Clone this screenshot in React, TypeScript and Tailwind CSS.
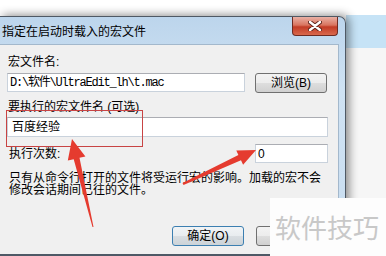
const FONT = { fontFamily: '"Liberation Sans", "Noto Sans CJK SC", sans-serif' };

const btn =
  'flex items-center justify-center h-[20px] w-[72px] rounded-[3px] border text-[12px] leading-[12px] text-black';
const grayFill = 'bg-[linear-gradient(#f3f3f3,#ececec_50%,#dedede_50%,#d0d0d0)]';
const input =
  'h-[19px] bg-white border border-[#c9d2dc] border-t-[#abadb3] flex items-center text-[12px] leading-[12px] text-black';

const CloseGlyph = () => (
  <svg width="14" height="10" viewBox="0 0 14 10" aria-hidden>
    <path d="M2 1l10 8M12 1L2 9" stroke="#5a2018" strokeWidth={4.2} strokeLinecap="round" />
    <path d="M2 1l10 8M12 1L2 9" stroke="#ffffff" strokeWidth={2.4} strokeLinecap="round" />
  </svg>
);

const Arrows = () => (
  <svg className="absolute inset-0 z-20 pointer-events-none" width="386" height="256" aria-hidden>
    {/* up arrow to the optional name box */}
    <polygon
      points="72,139 85.4,156.4 79.5,157.8 93.5,227 92.5,227 73.7,159.2 67.8,160.6"
      fill="#e53b2f"
    />
    {/* arrow to the run count box */}
    <polygon
      points="256,150 243.1,164.8 241,160.3 183.5,185 182.5,183 238.4,154.9 236.3,150.4"
      fill="#e53b2f"
    />
  </svg>
);

export default function App() {
  return (
    <div className="relative w-[386px] h-[256px] overflow-hidden bg-white flex" style={FONT}>
      {/* dialog window */}
      <div className="relative z-10 w-[346px] mt-[16px] flex flex-col bg-[linear-gradient(#bcd5ec,#cfe2f3_30%,#c8ddf0)] border-t border-r border-[#4f5964] rounded-tr-[7px] shadow-[3px_-1px_10px_rgba(0,0,0,0.45)]">
        <div className="h-[27px] flex items-start justify-between">
          <span className="pl-[2px] pt-[9px] text-[12px] leading-[12px] text-black">
            指定在启动时载入的宏文件
          </span>
          <div className="mr-[7px] w-[46px] h-[19px] rounded-b-[4px] border border-t-0 border-[#6e2b22] bg-[linear-gradient(#e9b1a5,#d9745f_45%,#c23c26_55%,#d9684c)] flex items-center justify-center">
            <CloseGlyph />
          </div>
        </div>

        <div className="flex-1 mr-[6px] bg-[#f0f0f0] border-t border-r border-[#a3b8cc] flex flex-col pl-[7px]">
          <div className="mt-[11px] pl-[1px] text-[12px] leading-[12px] text-black">宏文件名:</div>

          <div className="mt-[5px] flex items-start">
            <div
              className={`${input} w-[238px] pl-[2px] tracking-[-1.2px]`}
              style={{ fontFamily: '"Liberation Mono", "Noto Sans CJK SC", monospace' }}
            >
              D:\软件\UltraEdit_lh\t.mac
            </div>
            <button type="button" className={`${btn} ${grayFill} ml-[10px] border-[#707070]`}>
              浏览(B)
            </button>
          </div>

          <div className="mt-[8px] pl-[1px] text-[12px] leading-[12px] text-black">要执行的宏文件名 (可选)</div>

          <div className={`${input} mt-[4px] h-[20px] w-[321px] pl-[4px] border-t-[#6f8fad]`}>百度经验</div>

          <div className="mt-[7px] flex items-center">
            <span className="w-[248px] pl-[2px] text-[12px] leading-[12px] text-black">执行次数:</span>
            <div className={`${input} w-[73px] pl-[2px]`}>0</div>
          </div>

          <p className="mt-[9px] pl-[2px] text-[12px] leading-[12px] text-black">
            只有从命令行打开的文件将受运行宏的影响。加载的宏不会
            <br />
            修改会话期间已往的文件。
          </p>

          <div className="mt-[30px] flex">
            <button
              type="button"
              className={`${btn} h-[19px] ml-[165px] border-[#3c7fb1] bg-[linear-gradient(#f1f4f6,#e8ecef_50%,#d9dee2_50%,#ccd3d8)]`}
            >
              确定(O)
            </button>
            {/* cancel button, its label is hidden under the watermark */}
            <button type="button" className={`${btn} h-[19px] ml-[12px] border-[#707070] ${grayFill}`} />
          </div>
        </div>
        <div className="h-[2px] bg-[#4e5966]" />
      </div>

      {/* background window behind */}
      <div className="flex-1 flex flex-col">
        <div className="h-[15px] bg-white" />
        <div className="h-[33px] bg-[#c6e3f6]" />
        <div className="flex-1 bg-[#f6f6f6]" />
      </div>

      {/* red highlight box */}
      <div className="absolute left-[6px] top-[110px] w-[137px] h-[37px] border border-[#c84444] z-20" />

      <Arrows />

      {/* watermark */}
      <div className="absolute left-[270px] top-[198px] w-[116px] h-[58px] bg-[#fdfdfd] z-30 flex items-center pl-[5px]">
        <span className="text-[26px] leading-[26px] text-[#c8c8c8]" style={{ fontFamily: '"Noto Sans CJK SC", sans-serif' }}>
          软件技巧
        </span>
      </div>
    </div>
  );
}
